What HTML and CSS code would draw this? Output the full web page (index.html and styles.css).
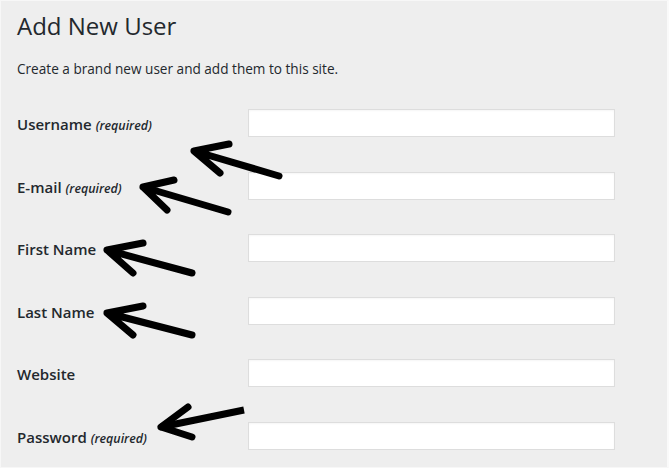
FILE: index.html
```html
<!DOCTYPE html>
<html>
<head>
<meta charset="utf-8">
<link rel="stylesheet" href="styles.css">
</head>
<body>
<div class="page">
  <h1 class="title">Add New User</h1>
  <p class="desc">Create a brand new user and add them to this site.</p>
  <div class="form">
    <div class="row"><label class="label">Username <span class="req">(required)</span></label><div class="field"><input class="input" type="text"></div></div>
    <div class="row"><label class="label">E-mail <span class="req">(required)</span></label><div class="field"><input class="input" type="text"></div></div>
    <div class="row"><label class="label">First Name</label><div class="field"><input class="input" type="text"></div></div>
    <div class="row"><label class="label">Last Name</label><div class="field"><input class="input" type="text"></div></div>
    <div class="row"><label class="label">Website</label><div class="field"><input class="input" type="text"></div></div>
    <div class="row"><label class="label">Password <span class="req">(required)</span></label><div class="field"><input class="input" type="password"></div></div>
  </div>
  <svg class="arrows" width="669" height="468" viewBox="0 0 669 468">
    <g fill="none" stroke="#000" stroke-width="7" stroke-linecap="round" stroke-linejoin="round">
      <path d="M279 176 L194 151 M229 144 L194 151 L220 173"/>
      <path d="M228 212 L143 187 M174 180 L143 187 L167 210"/>
      <path d="M192 273 L107 250 M143 243 L107 250 L133 273"/>
      <path d="M192 335 L107 313 M143 306 L107 313 L133 335"/>
      <path d="M161 427 L188 407 M161 427 L192 437"/>
      <path d="M161 427 L244 410" stroke-linecap="butt"/>
    </g>
  </svg>
</div>
</body>
</html>
```
FILE: styles.css
```css
html, body {
  margin: 0;
  padding: 0;
}
body {
  font-family: "Open Sans", "Liberation Sans", sans-serif;
  color: #23282d;
  background: #ffffff;
}
.page {
  position: relative;
  box-sizing: border-box;
  width: 669px;
  height: 468px;
  background: #eeeeee;
  border-top: 1px solid #f7f7f7;
  border-left: 1px solid #f7f7f7;
  border-bottom: 1px solid #f7f7f7;
  border-right: 2px solid #fafafa;
  padding: 9px 0 0 16px;
}
.title {
  margin: 0;
  font-size: 24px;
  font-weight: 400;
  line-height: 32px;
}
.desc {
  margin: 17px 0 0 0;
  font-size: 13.6px;
  line-height: 20px;
}
.form {
  margin-top: 30px;
  display: flex;
  flex-direction: column;
}
.row {
  display: grid;
  grid-template-columns: 231px 367px;
  height: 62.6px;
}
.label {
  font-size: 15px;
  font-weight: 600;
  line-height: 20px;
  padding-top: 5px;
}
.req {
  font-style: italic;
  font-size: 12.4px;
}
.field {
  display: flex;
}
.input {
  box-sizing: border-box;
  width: 367px;
  height: 28px;
  margin: 0;
  border: 1px solid #dddddd;
  background: #ffffff;
  box-shadow: inset 0 1px 2px rgba(0,0,0,0.04);
  padding: 3px 5px;
  outline: none;
}
.arrows {
  position: absolute;
  left: -1px;
  top: -1px;
}
```
